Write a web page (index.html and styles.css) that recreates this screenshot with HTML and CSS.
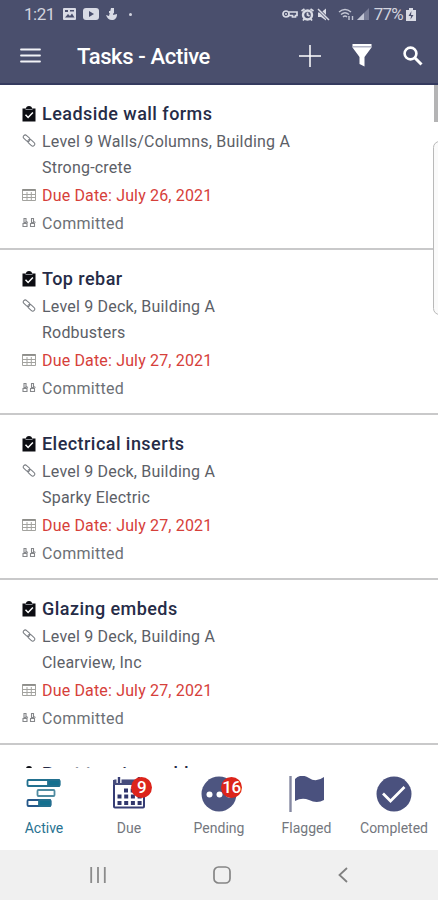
FILE: index.html
```html
<!DOCTYPE html>
<html lang="en">
<head>
    <meta charset="UTF-8">
    <meta name="viewport" content="width=device-width, initial-scale=1.0">
    <title>Tasks - Active</title>
    <link rel="stylesheet" href="styles.css">
</head>
<body>
    <!-- Shared icons for the task rows -->
    <svg class="sprite" aria-hidden="true">
        <symbol id="icon-task" viewBox="0 0 14 16">
            <path d="M.5 2.500h3.500a3 2.500 0 0 1 6 0h3.500V15.500H.5z" fill="#0c0d12"/>
            <path d="M3.500 3.500h7" stroke="#8d8f96" stroke-width="1"/>
            <path d="M3.500 8.800l2.600 2.700 4.800-5" fill="none" stroke="#fff" stroke-width="1.500"/>
        </symbol>
        <symbol id="icon-link" viewBox="0 0 14 14">
            <g fill="none" stroke="#777b80" stroke-width="1">
                <rect x="-3.8" y="-2" width="7.6" height="4" rx="2" transform="translate(4.6 4.2) rotate(43)"/>
                <rect x="-4" y="-2" width="8" height="4" rx="2" transform="translate(9.3 8.7) rotate(43)"/>
            </g>
        </symbol>
        <symbol id="icon-date" viewBox="0 0 14 14">
            <path d="M.5 1.500h13v11H.5zM5 4v8M9.300 4v8M1 6.500h12M1 9.500h12" fill="none" stroke="#a3a39f" stroke-width="1"/>
            <path d="M.5 2h13" stroke="#8b8b87" stroke-width="1.800"/>
        </symbol>
        <symbol id="icon-commit" viewBox="0 0 14 12">
            <g fill="none" stroke="#85878a" stroke-width="1.1">
                <path d="M2 1.5h2v4H2zM9.5 1.5h2v4h-2zM1 6.500h4v3H1zM8.500 6.500h4v3h-4z"/>
                <path d="M4 4.5l2 1M11.500 4.5l2 1"/>
            </g>
        </symbol>
    </svg>

    <div class="phone">
        <div class="status-bar">
            <div class="status-left">
                <span class="clock">1:21</span>
                <svg width="13" height="12" viewBox="0 0 13 12"><rect width="13" height="12" rx="1" fill="#d9dbe5"/><path d="M2 9.5l3-3.5 2 2 2-2.5 2.5 4z" fill="#4a4f6d"/><path d="M2 2h3v2H2zM7 2h4v1.5H7z" fill="#4a4f6d"/></svg>
                <svg width="16" height="12" viewBox="0 0 16 12"><rect width="16" height="12" rx="3" fill="#d9dbe5"/><path d="M6 3l5 3-5 3z" fill="#4a4f6d"/></svg>
                <svg class="anchor" width="12" height="14" viewBox="0 0 12 14"><path d="M5 1h3v3L7 8l4-1c0 4-2 6-5 6S1 11 0 8l3 1z" fill="#d9dbe5"/><path d="M3 5h5" stroke="#d9dbe5" stroke-width="2"/></svg>
                <span class="dot"></span>
            </div>
            <div class="status-right">
                <svg width="16" height="10" viewBox="0 0 16 10"><g fill="none" stroke="#d9dbe5" stroke-width="1.7"><circle cx="4" cy="5" r="3"/><path d="M7 3h8v3.5h-1.5V8h-3V6.5H7"/></g><circle cx="4" cy="5" r="1" fill="#d9dbe5"/></svg>
                <svg width="13" height="13" viewBox="0 0 13 13"><circle cx="6.5" cy="7" r="4.5" fill="none" stroke="#d9dbe5" stroke-width="2.4"/><path d="M.5 3l3-2M12.500 3l-3-2M2 12.500l2-2.500M11 12.500L9 10M6.5 4.5V7l2 1" stroke="#d9dbe5" stroke-width="1.8" fill="none"/></svg>
                <svg width="13" height="13" viewBox="0 0 13 13"><path d="M1 4.500h3l5-4v12L4 9H1z" fill="#d9dbe5"/><path d="M1 1l11 11" stroke="#4a4f6d" stroke-width="3"/><path d="M1 1l11 11" stroke="#d9dbe5" stroke-width="1.5"/></svg>
                <svg class="wifi" width="16" height="13" viewBox="0 0 16 13"><g fill="none" stroke="#c3c6d5" stroke-width="1.4"><path d="M1 4q6-5 12 0M3 6.5q4-3.5 8 0M5 9q2-2 4 0"/><path d="M11 8v4M14.5 8v4"/></g></svg>
                <svg width="12" height="12" viewBox="0 0 12 12"><path d="M0 12L12 0v12z" fill="#777b95"/><path d="M0 12l7-7v7z" fill="#c3c6d5"/></svg>
                <span class="battery-text">77%</span>
                <svg width="10" height="13" viewBox="0 0 10 13"><path d="M0 2h3V0h4v2h3v11H0z" fill="#d9dbe5"/><path d="M5.5 3L2.5 8H5l-.5 3.5L7.5 7H5z" fill="#4a4f6d"/></svg>
            </div>
        </div>

        <header class="app-bar">
            <svg class="menu" width="21" height="15" viewBox="0 0 21 15"><path d="M1 1.5h19M1 7.5h19M1 13.5h19" stroke="#f2f3f7" stroke-width="1.8" stroke-linecap="round"/></svg>
            <h1>Tasks - Active</h1>
            <div class="actions">
                <svg width="22" height="22" viewBox="0 0 22 22"><path d="M11 0v22M0 11h22" stroke="#fff" stroke-width="1.5"/></svg>
                <svg width="20" height="23" viewBox="0 0 20 23"><path d="M.5 0h19v3.5L12.5 13v9.5L7.5 20v-7L.5 3.5z" fill="#fff"/><path d="M1 2.8h18" stroke="#9da1b7" stroke-width="1.2"/></svg>
                <svg width="20" height="20" viewBox="0 0 20 20"><circle cx="7.5" cy="7.5" r="5.9" fill="none" stroke="#fff" stroke-width="2.6"/><path d="M12 12l6.5 6.5" stroke="#fff" stroke-width="3"/></svg>
            </div>
        </header>

        <main class="task-list">
            <div class="scroll-thumb"></div>
            <div class="edge-panel"></div>

            <article class="task">
                <h2 class="row title"><svg><use href="#icon-task"/></svg><span>Leadside wall forms</span></h2>
                <div class="row location"><svg><use href="#icon-link"/></svg><span>Level 9 Walls/Columns, Building A</span></div>
                <div class="row company"><span>Strong-crete</span></div>
                <div class="row due"><svg><use href="#icon-date"/></svg><span>Due Date: July 26, 2021</span></div>
                <div class="row state"><svg><use href="#icon-commit"/></svg><span>Committed</span></div>
            </article>

            <article class="task">
                <h2 class="row title"><svg><use href="#icon-task"/></svg><span>Top rebar</span></h2>
                <div class="row location"><svg><use href="#icon-link"/></svg><span>Level 9 Deck, Building A</span></div>
                <div class="row company"><span>Rodbusters</span></div>
                <div class="row due"><svg><use href="#icon-date"/></svg><span>Due Date: July 27, 2021</span></div>
                <div class="row state"><svg><use href="#icon-commit"/></svg><span>Committed</span></div>
            </article>

            <article class="task">
                <h2 class="row title"><svg><use href="#icon-task"/></svg><span>Electrical inserts</span></h2>
                <div class="row location"><svg><use href="#icon-link"/></svg><span>Level 9 Deck, Building A</span></div>
                <div class="row company"><span>Sparky Electric</span></div>
                <div class="row due"><svg><use href="#icon-date"/></svg><span>Due Date: July 27, 2021</span></div>
                <div class="row state"><svg><use href="#icon-commit"/></svg><span>Committed</span></div>
            </article>

            <article class="task">
                <h2 class="row title"><svg><use href="#icon-task"/></svg><span>Glazing embeds</span></h2>
                <div class="row location"><svg><use href="#icon-link"/></svg><span>Level 9 Deck, Building A</span></div>
                <div class="row company"><span>Clearview, Inc</span></div>
                <div class="row due"><svg><use href="#icon-date"/></svg><span>Due Date: July 27, 2021</span></div>
                <div class="row state"><svg><use href="#icon-commit"/></svg><span>Committed</span></div>
            </article>

            <article class="task">
                <h2 class="row title"><svg><use href="#icon-task"/></svg><span>Post tension cables</span></h2>
            </article>
        </main>

        <nav class="tabs">
            <div class="tab active">
                <div class="tab-icon">
                    <svg width="36" height="36" viewBox="0 0 36 36">
                        <g stroke="#22708f" stroke-width="1.8">
                            <rect x="1.5" y="4" width="32" height="6" rx="1" fill="#fff"/>
                            <rect x="22" y="4" width="11.5" height="6" rx="1" fill="#14708f"/>
                            <rect x="11.5" y="14" width="17" height="6" rx="1" fill="#fff" stroke="#4f8ba0"/>
                            <rect x="1.5" y="24" width="23" height="6" rx="1" fill="#fff" stroke="#26588a"/>
                            <rect x="13" y="24" width="11.5" height="6" rx="1" fill="#14708f"/>
                        </g>
                    </svg>
                </div>
                <span>Active</span>
            </div>
            <div class="tab">
                <div class="tab-icon">
                    <svg width="36" height="36" viewBox="0 0 36 36">
                        <rect x="3" y="4.5" width="30" height="27" rx="1" fill="#fff" stroke="#363d75" stroke-width="2"/>
                        <path d="M2 4h32v5H2z" fill="#464c7c"/>
                        <path d="M8 1v6M28 1v6" stroke="#fff" stroke-width="5"/>
                        <path d="M8 1v6M28 1v6" stroke="#363d75" stroke-width="2.4"/>
                        <path d="M13 14.500h18M6.500 20.500h25M6.500 27h25" stroke="#30366c" stroke-width="4" stroke-dasharray="4 2.700"/>
                    </svg>
                    <b class="badge">9</b>
                </div>
                <span>Due</span>
            </div>
            <div class="tab">
                <div class="tab-icon">
                    <svg width="36" height="36" viewBox="0 0 36 36"><circle cx="18" cy="18" r="17.5" fill="#4d5580"/><g fill="#fff"><circle cx="8.500" cy="18.500" r="3"/><circle cx="18.500" cy="18.500" r="3"/><circle cx="28" cy="18.500" r="3"/></g></svg>
                    <b class="badge">16</b>
                </div>
                <span>Pending</span>
            </div>
            <div class="tab">
                <div class="tab-icon">
                    <svg width="36" height="36" viewBox="0 0 36 36"><path d="M1.500 0v36" stroke="#8588a1" stroke-width="2.400"/><path d="M6 3Q12-3 20 2q7 5 15-1v23q-7 4-15 0-7-3-14 1z" fill="#4a517e"/></svg>
                </div>
                <span>Flagged</span>
            </div>
            <div class="tab">
                <div class="tab-icon">
                    <svg width="36" height="36" viewBox="0 0 36 36"><circle cx="18" cy="18" r="17.500" fill="#4a517e"/><path d="M7 17.500l7.500 7.500L28.500 11" fill="none" stroke="#fff" stroke-width="2.700"/></svg>
                </div>
                <span>Completed</span>
            </div>
        </nav>

        <div class="system-nav">
            <svg width="16" height="16" viewBox="0 0 16 16"><path d="M1.200 0v16M8 0v16M14.800 0v16" stroke="#8b8b8b" stroke-width="1.800"/></svg>
            <svg width="18" height="18" viewBox="0 0 18 18"><rect x="1" y="1" width="16" height="16" rx="4.500" fill="none" stroke="#858585" stroke-width="1.700"/></svg>
            <svg width="10" height="16" viewBox="0 0 10 16"><path d="M9 1L1.500 8 9 15" fill="none" stroke="#808080" stroke-width="1.800"/></svg>
        </div>
    </div>
</body>
</html>
```
FILE: styles.css
```css
* {
    box-sizing: border-box;
}
body {
    margin: 0;
    font-family: Roboto, "Liberation Sans", sans-serif;
    background: #fff;
}
svg {
    display: block;
    flex: none;
}
.sprite {
    display: none;
}
.phone {
    display: flex;
    flex-direction: column;
    width: 438px;
    height: 900px;
    overflow: hidden;
}

/* Top bars */
.status-bar {
    display: flex;
    justify-content: space-between;
    height: 28px;
    padding: 0 22px 0 24px;
    background: #4a4f6d;
    color: #d2d4df;
    font-size: 17px;
}
.status-left,
.status-right {
    display: flex;
    align-items: center;
}
.status-left {
    gap: 7px;
}
.clock {
    width: 32px;
    letter-spacing: -0.5px;
}
.dot {
    width: 3px;
    height: 3px;
    margin-left: 4px;
    border-radius: 50%;
    background: #d2d4df;
}
.status-right {
    gap: 3px;
}
.wifi {
    margin-left: 5px;
}
.battery-text {
    margin-left: 2px;
    font-size: 17px;
    letter-spacing: -0.8px;
}
.app-bar {
    display: flex;
    align-items: center;
    height: 57px;
    padding: 0 15px 0 20px;
    background: #4a4f6d;
    border-bottom: 2px solid #343a5e;
}
.app-bar h1 {
    margin: 2px 0 0 36px;
    color: #fff;
    font-size: 22px;
    font-weight: 500;
    letter-spacing: -0.35px;
}
.actions {
    display: flex;
    align-items: center;
    gap: 31px;
    margin-left: auto;
}

/* Task list */
.task-list {
    position: relative;
    flex: none;
    height: 683px;
    overflow: hidden;
}
.task {
    height: 165px;
    padding: 14px 22px 0;
    border-bottom: 2px solid #c9c9ca;
}
.row {
    display: flex;
    align-items: center;
    height: 28px;
    margin: 0;
    color: #5c6067;
    font-size: 16px;
    font-weight: 400;
    letter-spacing: 0.2px;
    white-space: nowrap;
}
.row svg {
    width: 14px;
    height: 14px;
    margin-right: 6px;
}
.title {
    color: #262c47;
    font-size: 18px;
    font-weight: 500;
    letter-spacing: 0.45px;
}
.title svg {
    height: 16px;
    margin-top: 2px;
}
.company {
    height: 25px;
    padding-left: 20px;
}
.due {
    height: 30px;
    color: #d6403a;
    letter-spacing: 0.16px;
}
.state {
    height: 26px;
    color: #6c7076;
    letter-spacing: 0.3px;
}
.scroll-thumb {
    position: absolute;
    top: 0;
    right: 0;
    width: 4px;
    height: 37px;
    background: #b4b4b5;
}
.edge-panel {
    position: absolute;
    top: 56px;
    right: -8px;
    width: 13px;
    height: 174px;
    border: 1px solid #b9b9b9;
    border-radius: 7px;
    background: #fafafa;
}

/* Bottom tabs */
.tabs {
    display: grid;
    grid-template-columns: 88px 82px 98px 77px 98px;
    flex: none;
    height: 82px;
    padding-top: 8px;
    background: #fff;
}
.tab {
    display: flex;
    flex-direction: column;
    align-items: center;
    color: #74777e;
    font-size: 14px;
    letter-spacing: 0;
}
.tab.active {
    color: #287291;
}
.tab-icon {
    position: relative;
    width: 36px;
    height: 36px;
    margin-bottom: 8px;
}
.badge {
    position: absolute;
    top: 1px;
    right: -5px;
    width: 21px;
    height: 21px;
    border-radius: 50%;
    background: #dc241b;
    color: #fff;
    font-size: 17px;
    font-weight: 500;
    line-height: 21px;
    letter-spacing: -0.5px;
    text-align: center;
}
.system-nav {
    display: flex;
    align-items: center;
    height: 50px;
    padding-left: 90px;
    gap: 107px;
    background: #f0f0f0;
}
```
